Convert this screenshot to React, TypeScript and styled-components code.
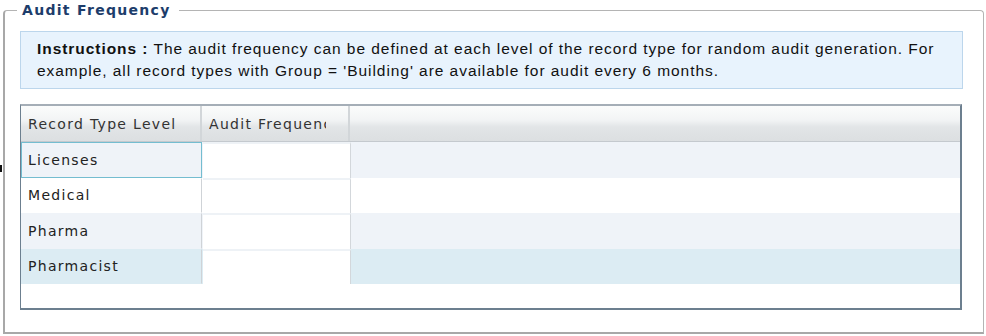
import React from 'react';
import styled, { createGlobalStyle } from 'styled-components';

const GlobalStyle = createGlobalStyle`
  html, body {
    margin: 0;
    padding: 0;
    background: #ffffff;
  }
`;

interface RecordRow {
  level: string;
  frequency: string;
}

const rows: RecordRow[] = [
  { level: 'Licenses', frequency: '' },
  { level: 'Medical', frequency: '' },
  { level: 'Pharma', frequency: '' },
  { level: 'Pharmacist', frequency: '' },
];

const App: React.FC = () => {
  return (
    <>
      <GlobalStyle />
      <Page>
        <Marker />
        <Frame>
          <Legend>Audit Frequency</Legend>
          <Instructions>
            <strong>Instructions :</strong> The audit frequency can be defined at each level of the record
            type for random audit generation. For
            <br />
            example, all record types with Group = 'Building' are available for audit every 6 months.
          </Instructions>
          <Grid>
            <HeaderRow>
              <HeaderCell $width={181}>
                <HeaderLabel>Record Type Level</HeaderLabel>
              </HeaderCell>
              <HeaderCell $width={148}>
                <HeaderLabel>Audit Frequency</HeaderLabel>
              </HeaderCell>
              <Filler />
            </HeaderRow>
            {rows.map((row, i) => (
              <Row key={row.level} $alt={i % 2 === 0} $selected={i === 3}>
                <LevelCell $focused={i === 0}>{row.level}</LevelCell>
                <EditCell>{row.frequency}</EditCell>
                <Filler />
              </Row>
            ))}
            <Empty />
          </Grid>
        </Frame>
      </Page>
    </>
  );
};

const Page = styled.div`
  display: flex;
  align-items: flex-start;
  width: 986px;
  height: 336px;
  box-sizing: border-box;
`;

// stray dark tick left of the panel
const Marker = styled.div`
  width: 2px;
  height: 7px;
  margin-top: 165px;
  margin-right: 1px;
  background: #111;
  flex: none;
`;

const Frame = styled.fieldset`
  margin: 0;
  width: 981px;
  height: 334px;
  box-sizing: border-box;
  padding: 11px 20px 0 15px;
  border: 1px solid #b4b4b4;
  border-left: 2px solid #a8a8a8;
  border-bottom: 2px solid #a8a8a8;
  border-radius: 4px 4px 0 0;
`;

const Legend = styled.legend`
  margin-left: -3px;
  padding: 0 8px 0 5px;
  font-family: 'DejaVu Sans', Verdana, sans-serif;
  font-weight: bold;
  font-size: 14px;
  letter-spacing: 1.3px;
  line-height: 20px;
  color: #1d3d6b;
`;

const Instructions = styled.div`
  box-sizing: border-box;
  height: 58px;
  padding: 6px 16px;
  background: #e8f3fd;
  border: 1px solid #bcd6ec;
  font-family: 'Liberation Sans', Arial, sans-serif;
  font-size: 15.5px;
  letter-spacing: 0.95px;
  line-height: 22px;
  white-space: nowrap;
  color: #111;

  strong {
    font-weight: bold;
  }
`;

const Grid = styled.div`
  margin-top: 15px;
  width: 942px;
  box-sizing: border-box;
  border-top: 2px solid #a5aeb7;
  border-left: 1px solid #6c7f8f;
  border-right: 2px solid #6c7f8f;
  border-bottom: 2px solid #6c7f8f;
  font-family: 'DejaVu Sans', Verdana, sans-serif;
  font-size: 14px;
  letter-spacing: 1.3px;
  color: #222;
`;

const HeaderRow = styled.div`
  display: flex;
  height: 35px;
  background: linear-gradient(#fbfcfc 0%, #f2f4f5 40%, #e2e5e7 60%, #dcdfe1 100%);
  border-bottom: 1px solid #c4c9ce;
`;

const HeaderCell = styled.div<{ $width: number }>`
  flex: none;
  width: ${p => p.$width}px;
  box-sizing: border-box;
  padding: 0 22px 0 7px;
  border-right: 2px solid #d2d6d9;
  display: flex;
  align-items: center;
  color: #333;
`;

const HeaderLabel = styled.span`
  display: block;
  flex: 1;
  min-width: 0;
  white-space: nowrap;
  overflow: hidden;
`;

const Filler = styled.div`
  flex: 1;
`;

const Row = styled.div<{ $alt: boolean; $selected: boolean }>`
  display: flex;
  height: 35.5px;
  background: ${p => (p.$selected ? '#dcecf3' : p.$alt ? '#eff3f8' : '#ffffff')};
`;

const LevelCell = styled.div<{ $focused: boolean }>`
  flex: none;
  width: 181px;
  box-sizing: border-box;
  padding: 0 6px;
  display: flex;
  align-items: center;
  border: 1px solid ${p => (p.$focused ? '#74bdd0' : 'transparent')};
  border-right: 1px solid ${p => (p.$focused ? '#74bdd0' : '#cfd3d7')};
`;

const EditCell = styled.div`
  flex: none;
  width: 148px;
  box-sizing: border-box;
  margin-left: 1px;
  background: #ffffff;
  border-top: 2px solid #eef2f6;
  border-right: 1px solid #d3d7db;
`;

const Empty = styled.div`
  height: 24px;
  background: #ffffff;
`;

export default App;
